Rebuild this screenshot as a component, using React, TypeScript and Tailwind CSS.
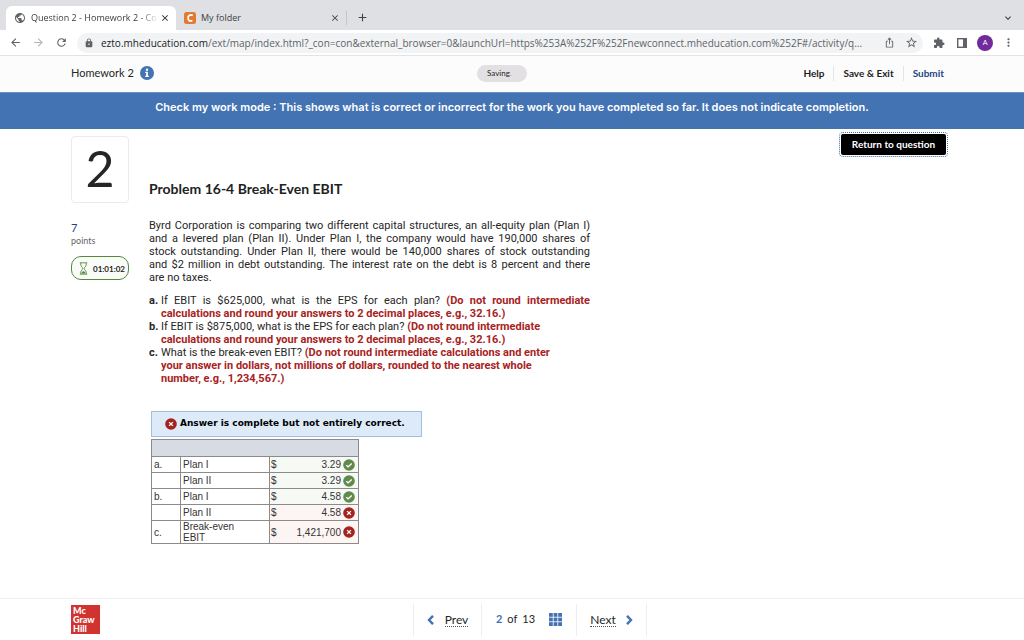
import { type ReactNode } from "react";
import clsx from "clsx";
import {
  MdAdd,
  MdArrowBack,
  MdArrowForward,
  MdClose,
  MdExpandMore,
  MdExtension,
  MdIosShare,
  MdLock,
  MdMoreVert,
  MdPublic,
  MdRefresh,
  MdStarBorder,
} from "react-icons/md";

interface Row {
  part: string;
  label: string;
  value: string;
  correct: boolean;
}

const rows: Row[] = [
  { part: "a.", label: "Plan I", value: "3.29", correct: true },
  { part: "", label: "Plan II", value: "3.29", correct: true },
  { part: "b.", label: "Plan I", value: "4.58", correct: true },
  { part: "", label: "Plan II", value: "4.58", correct: false },
  { part: "c.", label: "Break-even EBIT", value: "1,421,700", correct: false },
];

function TabStrip() {
  return (
    <div className="flex h-[30px] items-end bg-[#dee0e4] pl-[6px] pr-[10px] font-['Open_Sans',sans-serif] text-[9px] text-[#3c4043]">
      <div className="flex h-6 w-[170px] items-center rounded-t-[6px] bg-white pl-[8px] pr-[6px]">
        <MdPublic size={12} className="shrink-0 text-[#5f6368]" />
        <span className="ml-[5px] flex-1 overflow-hidden whitespace-nowrap [mask-image:linear-gradient(to_right,black_85%,transparent)]">
          Question 2 - Homework 2 - Co
        </span>
        <button type="button" aria-label="Close tab" className="ml-px text-[#202124]">
          <MdClose size={10} />
        </button>
      </div>
      <div className="flex h-6 w-[170px] items-center pl-2 pr-[6px]">
        <svg viewBox="0 0 12 12" className="size-3 shrink-0">
          <rect width="12" height="12" rx="2.5" fill="#e27a31" />
          <path d="M8.8 3.2H5.6L4.2 4.6v2.9l1.4 1.3h2.8" fill="none" stroke="#fff" strokeWidth="1.7" />
        </svg>
        <span className="ml-[5px] flex-1">My folder</span>
        <button type="button" aria-label="Close tab">
          <MdClose size={10} />
        </button>
      </div>
      <div className="mb-[5px] h-[14px] w-px bg-[#c3c5c9]" />
      <button type="button" aria-label="New tab" className="mb-[6px] ml-[9px]">
        <MdAdd size={13} />
      </button>
      <button type="button" aria-label="Search tabs" className="mb-[6px] ml-auto">
        <MdExpandMore size={12} />
      </button>
    </div>
  );
}

function Toolbar() {
  return (
    <div className="flex h-[26px] items-center border-b border-[#e2e3e4] bg-white px-[9px] text-[#5f6368]">
      <button type="button" aria-label="Back">
        <MdArrowBack size={13} />
      </button>
      <button type="button" aria-label="Forward" className="ml-[10px] text-[#b4b6b9]">
        <MdArrowForward size={13} />
      </button>
      <button type="button" aria-label="Reload" className="ml-[10px]">
        <MdRefresh size={13} />
      </button>
      <div className="ml-[9px] flex h-5 min-w-0 flex-1 items-center rounded-full bg-[#f1f3f4] pl-[7px] pr-[5px]">
        <MdLock size={10} className="shrink-0" />
        <span className="ml-[7px] min-w-0 flex-1 overflow-hidden whitespace-nowrap font-['Open_Sans',sans-serif] text-[10px] leading-4">
          <span className="text-[#202124]">ezto.mheducation.com</span>
          /ext/map/index.html?_con=con&amp;external_browser=0&amp;launchUrl=https%253A%252F%252Fnewconnect.mheducation.com%252F#/activity/q...
        </span>
        <button type="button" aria-label="Share" className="ml-2">
          <MdIosShare size={11} />
        </button>
        <button type="button" aria-label="Bookmark" className="ml-[10px]">
          <MdStarBorder size={13} />
        </button>
      </div>
      <button type="button" aria-label="Extensions" className="ml-[10px]">
        <MdExtension size={12} />
      </button>
      <button type="button" aria-label="Side panel" className="ml-3">
        <svg viewBox="0 0 10 10" className="size-[10px]">
          <rect x=".7" y=".7" width="8.6" height="8.6" fill="none" stroke="currentColor" strokeWidth="1.4" />
          <rect x="6" y="1" width="3.5" height="8" fill="currentColor" />
        </svg>
      </button>
      <button
        type="button"
        className="ml-[10px] size-4 rounded-full bg-[#702a9c] font-[Roboto,sans-serif] text-[8px] text-white"
      >
        A
      </button>
      <button type="button" aria-label="Menu" className="ml-[9px]">
        <MdMoreVert size={13} />
      </button>
    </div>
  );
}

function AppHeader() {
  return (
    <header className="bg-[#fcfcfc]">
      <div className="mx-auto flex h-[36px] max-w-[882px] items-center pb-[2px]">
        <div className="flex w-[406px] items-center gap-[6px]">
          <h1 className="text-[11px] text-[#262626]">Homework 2</h1>
          <svg viewBox="0 0 14 14" className="size-[14px]">
            <circle cx="7" cy="7" r="7" fill="#4473b3" />
            <circle cx="7" cy="3.7" r="1.2" fill="#fff" />
            <path d="M5.2 5.8h2.7v4h.9v1.1H5.2V9.8h.9V6.9h-.9z" fill="#fff" />
          </svg>
        </div>
        <span className="h-[17px] w-[50px] rounded-full bg-[#e2e0e3] pl-[10px] text-[8px] leading-[17px] text-[#262626]">
          Saving<span className="text-gray-400">.</span>
        </span>
        <nav className="flex flex-1 items-center justify-end text-[10px] font-bold text-[#1d1d1d]">
          <a href="#help" className="px-[9px]">Help</a>
          <a href="#exit" className="border-l border-[#e5e5e5] px-[9px]">Save &amp; Exit</a>
          <a href="#submit" className="border-l border-[#e5e5e5] px-[9px] text-[#1f4486]">Submit</a>
        </nav>
      </div>
    </header>
  );
}

function Line({ children }: { children: ReactNode }) {
  return <span className="block whitespace-nowrap [text-align-last:justify]">{children}</span>;
}

function Note({ children }: { children: ReactNode }) {
  return <strong className="font-bold text-[#a8231d]">{children}</strong>;
}

function Status({ correct }: { correct: boolean }) {
  return (
    <svg viewBox="0 0 12 12" className="size-3 shrink-0" role="img" aria-label={correct ? "correct" : "incorrect"}>
      <circle cx="6" cy="6" r="5.8" fill={correct ? "#5f8a4c" : "#a5231e"} />
      <path
        d={correct ? "M3.2 6.2l1.9 1.6 3.7-3.4" : "M4.1 4.1l3.8 3.8M7.9 4.1L4.1 7.9"}
        fill="none"
        stroke="#fff"
        strokeWidth="1.3"
      />
    </svg>
  );
}

function AnswerTable() {
  return (
    <table className="mt-[2px] w-[208px] table-fixed border-collapse font-['Liberation_Sans',Arial,sans-serif] text-[10px] leading-[11px] text-[#333]">
      <colgroup>
        <col className="w-[29px]" />
        <col className="w-[89px]" />
        <col />
      </colgroup>
      <thead>
        <tr className="h-[17px] bg-[#d7dbe4]">
          <th colSpan={3} className="border border-[#8b8b8b]" />
        </tr>
      </thead>
      <tbody>
        {rows.map((row, i) => (
          <tr key={i} className="h-4">
            <td className="border border-[#8b8b8b] px-[2px]">{row.part}</td>
            <td className="border border-[#8b8b8b] pl-[2px] pr-[30px]">{row.label}</td>
            <td className={clsx("border border-[#8b8b8b] pl-px pr-[3px]", row.correct ? "bg-[#f7faf4]" : "bg-[#fcf5f4]")}>
              <div className="flex items-center">
                <span>$</span>
                <span className="ml-auto mr-[2px]">{row.value}</span>
                <Status correct={row.correct} />
              </div>
            </td>
          </tr>
        ))}
      </tbody>
    </table>
  );
}

function Sidebar() {
  return (
    <aside className="w-[58px] shrink-0 pt-[7px]">
      <div className="flex h-[67px] items-center justify-center rounded-[4px] border border-[#ebebeb] pb-1 text-[50px] leading-none text-[#262626]">
        2
      </div>
      <div className="mt-[18px] text-[11px] leading-[14px] text-[#1f4486]">7</div>
      <div className="text-[9px] leading-3 text-[#666]">points</div>
      <div className="mt-[9px] flex h-6 items-center justify-end gap-[5px] rounded-[10px] border border-[#55873f] bg-[#f9fcf6] pr-[3px]">
        <svg viewBox="0 0 9 13" className="h-[13px] w-[9px]" fill="none" stroke="#55873f">
          <path d="M.8 .8h7.4M.8 12.2h7.4M1.8 1v1.9c0 1.6 2 2.3 2 3.6s-2 2-2 3.6V12M7.2 1v1.9c0 1.6-2 2.3-2 3.6s2 2 2 3.6V12" strokeWidth=".9" />
          <path d="M2.5 11.5c0-1.3 1.2-1.8 2-2.4.8.6 2 1.1 2 2.4z" fill="#55873f" stroke="none" />
        </svg>
        <span className="pt-[2px] text-[8px] font-bold text-[#222]">01:01:02</span>
      </div>
    </aside>
  );
}

function Problem() {
  return (
    <section className="ml-5 w-[441px]">
      <h2 className="mt-[52px] text-[14px] font-bold leading-4 text-[#222]">Problem 16-4 Break-Even EBIT</h2>
      <div className="mt-[22px] font-[Roboto,sans-serif] text-[11px] leading-[13px] text-[#262626]">
        <p>
          <Line>Byrd Corporation is comparing two different capital structures, an all-equity plan (Plan I)</Line>
          <Line>and a levered plan (Plan II). Under Plan I, the company would have 190,000 shares of</Line>
          <Line>stock outstanding. Under Plan II, there would be 140,000 shares of stock outstanding</Line>
          <Line>and $2 million in debt outstanding. The interest rate on the debt is 8 percent and there</Line>
          are no taxes.
        </p>
        <ol className="mt-[10px] whitespace-nowrap">
          <li className="flex">
            <b className="w-3 shrink-0">a.</b>
            <div className="flex-1">
              <Line>
                If EBIT is $625,000, what is the EPS for each plan? <Note>(Do not round intermediate</Note>
              </Line>
              <Note>calculations and round your answers to 2 decimal places, e.g., 32.16.)</Note>
            </div>
          </li>
          <li className="flex">
            <b className="w-3 shrink-0">b.</b>
            <div>
              If EBIT is $875,000, what is the EPS for each plan? <Note>(Do not round intermediate</Note>
              <br />
              <Note>calculations and round your answers to 2 decimal places, e.g., 32.16.)</Note>
            </div>
          </li>
          <li className="flex">
            <b className="w-3 shrink-0">c.</b>
            <div>
              What is the break-even EBIT?{" "}
              <Note>
                (Do not round intermediate calculations and enter
                <br />
                your answer in dollars, not millions of dollars, rounded to the nearest whole
                <br />
                number, e.g., 1,234,567.)
              </Note>
            </div>
          </li>
        </ol>
      </div>
      <div className="ml-[2px] mt-[26px]">
        <div className="flex h-[26px] w-[271px] items-center gap-[3px] whitespace-nowrap border border-[#9fbfdb] bg-[#ddeaf8] pl-[13px] font-['DejaVu_Sans',Verdana,sans-serif] text-[9px] font-bold text-black">
          <Status correct={false} />
          Answer is complete but not entirely correct.
        </div>
        <AnswerTable />
      </div>
    </section>
  );
}

function Footer() {
  return (
    <footer className="border-t border-[#f0f0f0] bg-white">
      <div className="mx-auto flex h-[41px] max-w-[882px] items-center">
        <div className="w-[342px]">
          <div className="size-[29px] bg-[#d13430] pl-[2px] pt-px text-[9px] font-black leading-[9px] text-white">
            Mc
            <br />
            Graw
            <br />
            Hill
          </div>
        </div>
        <nav className="flex h-8 items-stretch text-[12px] text-[#262626]">
          <a href="#prev" className="flex w-[68px] items-center justify-center gap-[11px] border-l border-[#eee]">
            <svg viewBox="0 0 7 10" className="h-[10px] w-[7px]" fill="none" stroke="#4473b3" strokeWidth="2.4">
              <path d="M6 .8L2 5l4 4.2" />
            </svg>
            <span className="border-b border-dotted border-[#555] leading-[13px]">Prev</span>
          </a>
          <div className="flex w-24 items-center justify-center gap-[5px] border-x border-[#eee] text-[11px]">
            <b className="text-[#4473b3]">2</b>
            <span>of</span>
            <span>13</span>
            <button type="button" aria-label="Question list" className="ml-[9px]">
              <svg viewBox="0 0 13 13" className="size-[13px]" fill="#4473b3">
                {[0, 4.6, 9.2].map((y) =>
                  [0, 4.6, 9.2].map((x) => <rect key={`${x}-${y}`} x={x} y={y} width="3.8" height="3.8" />)
                )}
              </svg>
            </button>
          </div>
          <a href="#next" className="flex w-[70px] items-center justify-center gap-[10px] border-r border-[#eee]">
            <span className="border-b border-dotted border-[#555] leading-[13px]">Next</span>
            <svg viewBox="0 0 7 10" className="h-[10px] w-[7px]" fill="none" stroke="#4473b3" strokeWidth="2.4">
              <path d="M1 .8L5 5 1 9.2" />
            </svg>
          </a>
        </nav>
      </div>
    </footer>
  );
}

export default function App() {
  return (
    <div className="flex min-h-screen flex-col bg-white font-[Lato,sans-serif]">
      <TabStrip />
      <Toolbar />
      <AppHeader />
      <div className="h-[37px] border-t border-[#6f93c4] bg-[#4473b3] pt-[6px] text-center font-[Inter,sans-serif] text-[11px] font-semibold leading-4 text-white">
        Check my work mode : This shows what is correct or incorrect for the work you have completed so far. It does not indicate completion.
      </div>
      <main className="mx-auto flex w-full max-w-[882px] flex-1">
        <Sidebar />
        <Problem />
        <button
          type="button"
          className="ml-auto mr-[7px] mt-[5px] h-[21px] w-[105px] rounded-[2px] bg-black text-[10px] font-bold text-white outline-1 outline-offset-1 outline-dotted outline-[#3f6fb5]"
        >
          Return to question
        </button>
      </main>
      <Footer />
    </div>
  );
}
